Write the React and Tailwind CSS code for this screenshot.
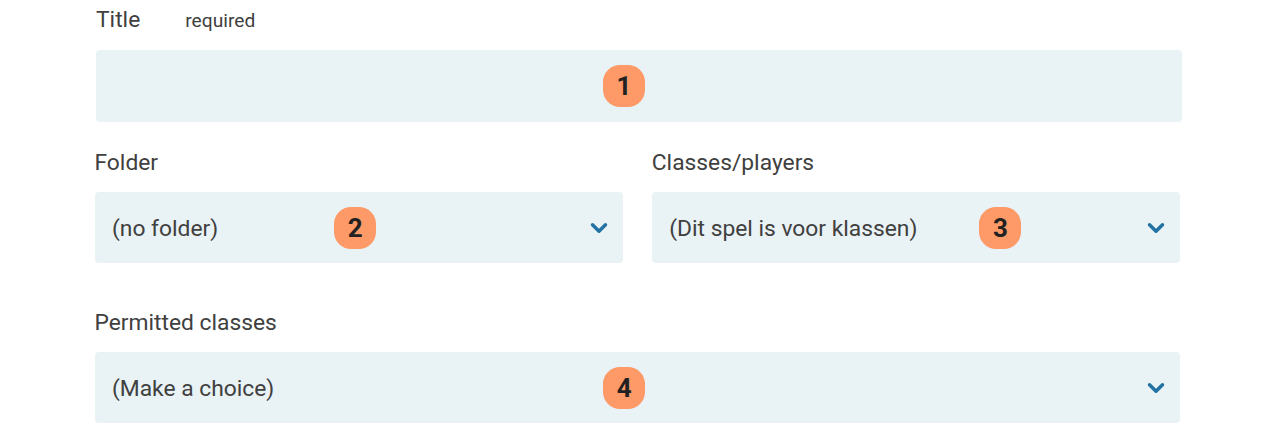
import React from 'react';
import { ChevronDown } from 'lucide-react';

const Badge = ({ n }) => (
  <span className="flex h-[42px] w-[42px] items-center justify-center rounded-[17px] bg-[#fd9a67] text-[26px] font-bold leading-none text-[#222]">
    {n}
  </span>
);

const Select = ({ value, n, badgeClass }) => (
  <div className="flex h-[71.5px] items-center rounded-[4px] bg-[#e9f2f5] pl-[17.5px] pr-[11px] pt-[2px]">
    <span className="pt-[2px] text-[22.8px] text-[#404040]">{value}</span>
    <span className={badgeClass}><Badge n={n} /></span>
    <ChevronDown size={26} strokeWidth={3.2} className="ml-auto text-[#2272a3]" />
  </div>
);

export default function App() {
  return (
    <div className="h-[434px] w-[1280px] overflow-hidden bg-white pl-[94.5px] pr-[100px] font-['Roboto',sans-serif] text-[#404040]">
      <div className="flex h-[50px] items-center pb-[9px] pl-[1.5px]">
        <span className="text-[22.8px]">Title</span>
        <span className="ml-[45px] pt-[2px] text-[19.2px]">required</span>
      </div>
      <div className="ml-[1.5px] mr-[-2px] flex h-[71.5px] items-center rounded-[4px] bg-[#e9f2f5] pl-[507px]">
        <Badge n="1" />
      </div>
      <div className="mt-[25px] grid grid-cols-2 gap-[29px]">
        <div>
          <div className="mb-[13px] text-[22.8px] leading-[32px]">Folder</div>
          <Select value="(no folder)" n="2" badgeClass="ml-[116px]" />
        </div>
        <div>
          <div className="mb-[13px] text-[22.8px] leading-[32px]">Classes/players</div>
          <Select value="(Dit spel is voor klassen)" n="3" badgeClass="ml-[62px]" />
        </div>
      </div>
      <div className="mt-[44px]">
        <div className="mb-[12.5px] text-[22.8px] leading-[32px]">Permitted classes</div>
        <Select value="(Make a choice)" n="4" badgeClass="ml-[329px]" />
      </div>
    </div>
  );
}
